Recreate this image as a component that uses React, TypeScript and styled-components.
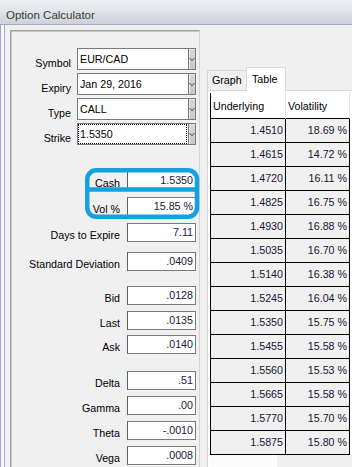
import React from "react";
import styled, { createGlobalStyle } from "styled-components";

const Global = createGlobalStyle`
  html, body { margin: 0; padding: 0; background: #f0f0f0; }
  body { font-family: "Liberation Sans", Arial, sans-serif; }
  #root { width: 352px; height: 467px; overflow: hidden; }
  * { box-sizing: border-box; }
`;

const Window = styled.div`
  width: 352px;
  height: 467px;
  display: flex;
  flex-direction: column;
  overflow: hidden;
  background: #f0f0f0;
`;

const TitleBar = styled.div`
  flex: none;
  height: 25px;
  padding-left: 6px;
  border-bottom: 1px solid #a3abba;
  background: linear-gradient(#eef0f3 0%, #e1e4e9 45%, #cdd1d9 100%);
`;

const Title = styled.div`
  font-size: 11.5px;
  line-height: 14px;
  padding-top: 8px;
  color: #3a3a3a;
`;

const Frame = styled.div`
  flex: 1;
  min-height: 0;
  display: flex;
  border-left: 1px solid #a2a2c2;
  padding-left: 3px;
  background: #f7f7fa;
`;

const FrameInner = styled.div`
  flex: 1;
  min-width: 0;
  display: flex;
  align-items: flex-start;
  gap: 7px;
  padding: 5px 0 0 5px;
  border-left: 1px solid #a6a6da;
  background: #f0f0f0;
`;

const LeftPanel = styled.div`
  position: relative;
  flex: none;
  width: 190px;
  height: 460px;
  display: flex;
  flex-direction: column;
  padding: 17px 3px 0 0;
  border-top: 1px solid #a0a0a0;
  border-left: 1px solid #a0a0a0;
  border-right: 1px solid #d4d4d4;
  box-shadow: inset 1px 1px 0 #c8c8c8;
`;

const Row = styled.div<{ $mt: number }>`
  display: flex;
  justify-content: flex-end;
  align-items: flex-end;
  margin-top: ${(p) => p.$mt}px;
`;

const Label = styled.div<{ $gap: number }>`
  font-size: 10.7px;
  line-height: 14px;
  color: #000;
  white-space: nowrap;
  margin-right: ${(p) => p.$gap}px;
`;

const Combo = styled.div`
  width: 119px;
  height: 22px;
  display: flex;
  border: 1px solid #7a7a7a;
  background: #fff;
`;

const ComboText = styled.div<{ $focused?: boolean }>`
  flex: 1;
  margin-right: 1px;
  padding-left: 1px;
  font-size: 10.7px;
  line-height: 18px;
  color: #000;
  border: 1px ${(p) => (p.$focused ? "dotted #000" : "solid transparent")};
`;

const DropButton = styled.div`
  width: 7px;
  display: flex;
  align-items: center;
  justify-content: center;
  border-left: 1px solid #7a7a7a;
  background: linear-gradient(#d8d8d8, #c8c8c8);
  box-shadow: inset 1px 1px 0 #e8e8e8;
`;

const Field = styled.div`
  width: 69px;
  height: 19px;
  border: 1px solid #7a7a7a;
  border-left-color: #5e5e5e;
  background: #fff;
  text-align: right;
  padding-right: 2px;
  font-size: 10.7px;
  line-height: 17px;
  color: #16163a;
`;

const Highlight = styled.svg`
  position: absolute;
  left: 74px;
  top: 137px;
  width: 115px;
  height: 52px;
  pointer-events: none;
`;

const RightArea = styled.div`
  flex: 1;
  min-width: 0;
  height: 460px;
  margin-top: 37px;
  display: flex;
  flex-direction: column;
`;

const TabRow = styled.div`
  flex: none;
  height: 23px;
  display: flex;
  align-items: flex-end;
  position: relative;
  z-index: 1;
`;

const Tab = styled.div<{ $active?: boolean }>`
  width: 40px;
  height: ${(p) => (p.$active ? 24 : 20)}px;
  margin-left: ${(p) => (p.$active ? -1 : 0)}px;
  margin-bottom: ${(p) => (p.$active ? -1 : 0)}px;
  padding-left: ${(p) => (p.$active ? 5 : 4)}px;
  border: 1px solid #d9d9d9;
  border-bottom: none;
  background: ${(p) => (p.$active ? "#fff" : "#f0f0f0")};
  font-size: 10.7px;
  line-height: ${(p) => (p.$active ? 22 : 18)}px;
  color: #000;
`;

const TabPanel = styled.div`
  flex: 1;
  display: flex;
  flex-direction: column;
  border-top: 1px solid #d9d9d9;
  border-left: 1px solid #d9d9d9;
  background: #fff;
  padding: 2px 0 0 2px;
`;

const Grid = styled.div`
  display: grid;
  grid-template-columns: 75px 64px;
  border-left: 1px solid #000;
  width: 140px;
`;

const HeadCell = styled.div`
  height: 26px;
  padding: 4px 0 0 2px;
  line-height: 18px;
  font-size: 10.7px;
  color: #000;
  background: #fff;
  border-right: 1px solid #e2e2e2;
  border-bottom: 1px solid #000;
`;

const Cell = styled.div`
  height: 24px;
  line-height: 23px;
  padding-right: 2px;
  text-align: right;
  font-size: 10.7px;
  color: #16163a;
  background: #f0f0f0;
  border-right: 1px solid #000;
  border-bottom: 1px solid #000;
`;

const ScrollStrip = styled.div`
  height: 13px;
  display: flex;
  background: #f0f0f0;
`;

const Thumb = styled.div`
  width: 67px;
  background: #fcfcfc;
`;

const Chevron = () => (
  <svg width="6" height="5" viewBox="0 0 6 5">
    <polyline points="0.5,1 3,3.8 5.5,1" fill="none" stroke="#4a4a4a" strokeWidth="1" />
  </svg>
);

const combos = [
  { label: "Symbol", value: "EUR/CAD", mt: 0 },
  { label: "Expiry", value: "Jan 29, 2016", mt: 3 },
  { label: "Type", value: "CALL", mt: 3 },
  { label: "Strike", value: "1.5350", mt: 3, focused: true },
];

const fields = [
  { label: "Cash", value: "1.5350", mt: 26 },
  { label: "Vol %", value: "15.85 %", mt: 7 },
  { label: "Days to Expire", value: "7.11", mt: 7 },
  { label: "Standard Deviation", value: ".0409", mt: 10 },
  { label: "Bid", value: ".0128", mt: 15 },
  { label: "Last", value: ".0135", mt: 6 },
  { label: "Ask", value: ".0140", mt: 5 },
  { label: "Delta", value: ".51", mt: 17 },
  { label: "Gamma", value: ".00", mt: 6 },
  { label: "Theta", value: "-.0010", mt: 6 },
  { label: "Vega", value: ".0008", mt: 6 },
];

const rows: [string, string][] = [
  ["1.4510", "18.69 %"],
  ["1.4615", "14.72 %"],
  ["1.4720", "16.11 %"],
  ["1.4825", "16.75 %"],
  ["1.4930", "16.88 %"],
  ["1.5035", "16.70 %"],
  ["1.5140", "16.38 %"],
  ["1.5245", "16.04 %"],
  ["1.5350", "15.75 %"],
  ["1.5455", "15.58 %"],
  ["1.5560", "15.53 %"],
  ["1.5665", "15.58 %"],
  ["1.5770", "15.70 %"],
  ["1.5875", "15.80 %"],
];

export default function App() {
  return (
    <Window>
      <Global />
      <TitleBar>
        <Title>Option Calculator</Title>
      </TitleBar>
      <Frame>
        <FrameInner>
          <LeftPanel>
            {combos.map((c) => (
              <Row key={c.label} $mt={c.mt}>
                <Label $gap={6}>{c.label}</Label>
                <Combo>
                  <ComboText $focused={c.focused}>{c.value}</ComboText>
                  <DropButton>
                    <Chevron />
                  </DropButton>
                </Combo>
              </Row>
            ))}
            {fields.map((f) => (
              <Row key={f.label} $mt={f.mt}>
                <Label $gap={7}>{f.label}</Label>
                <Field>{f.value}</Field>
              </Row>
            ))}
            <Highlight viewBox="0 0 115 52">
              <rect x="2.25" y="2.25" width="109.75" height="46.5" rx="9" ry="9" fill="none" stroke="#14a0e2" strokeWidth="4.5" />
              <line x1="2" y1="21.5" x2="112" y2="21.5" stroke="#14a0e2" strokeWidth="4.5" />
            </Highlight>
          </LeftPanel>
          <RightArea>
            <TabRow>
              <Tab>Graph</Tab>
              <Tab $active>Table</Tab>
            </TabRow>
            <TabPanel>
              <Grid>
                <HeadCell>Underlying</HeadCell>
                <HeadCell>Volatility</HeadCell>
                {rows.map(([u, v]) => (
                  <React.Fragment key={u}>
                    <Cell>{u}</Cell>
                    <Cell>{v}</Cell>
                  </React.Fragment>
                ))}
              </Grid>
              <ScrollStrip>
                <Thumb />
              </ScrollStrip>
            </TabPanel>
          </RightArea>
        </FrameInner>
      </Frame>
    </Window>
  );
}
